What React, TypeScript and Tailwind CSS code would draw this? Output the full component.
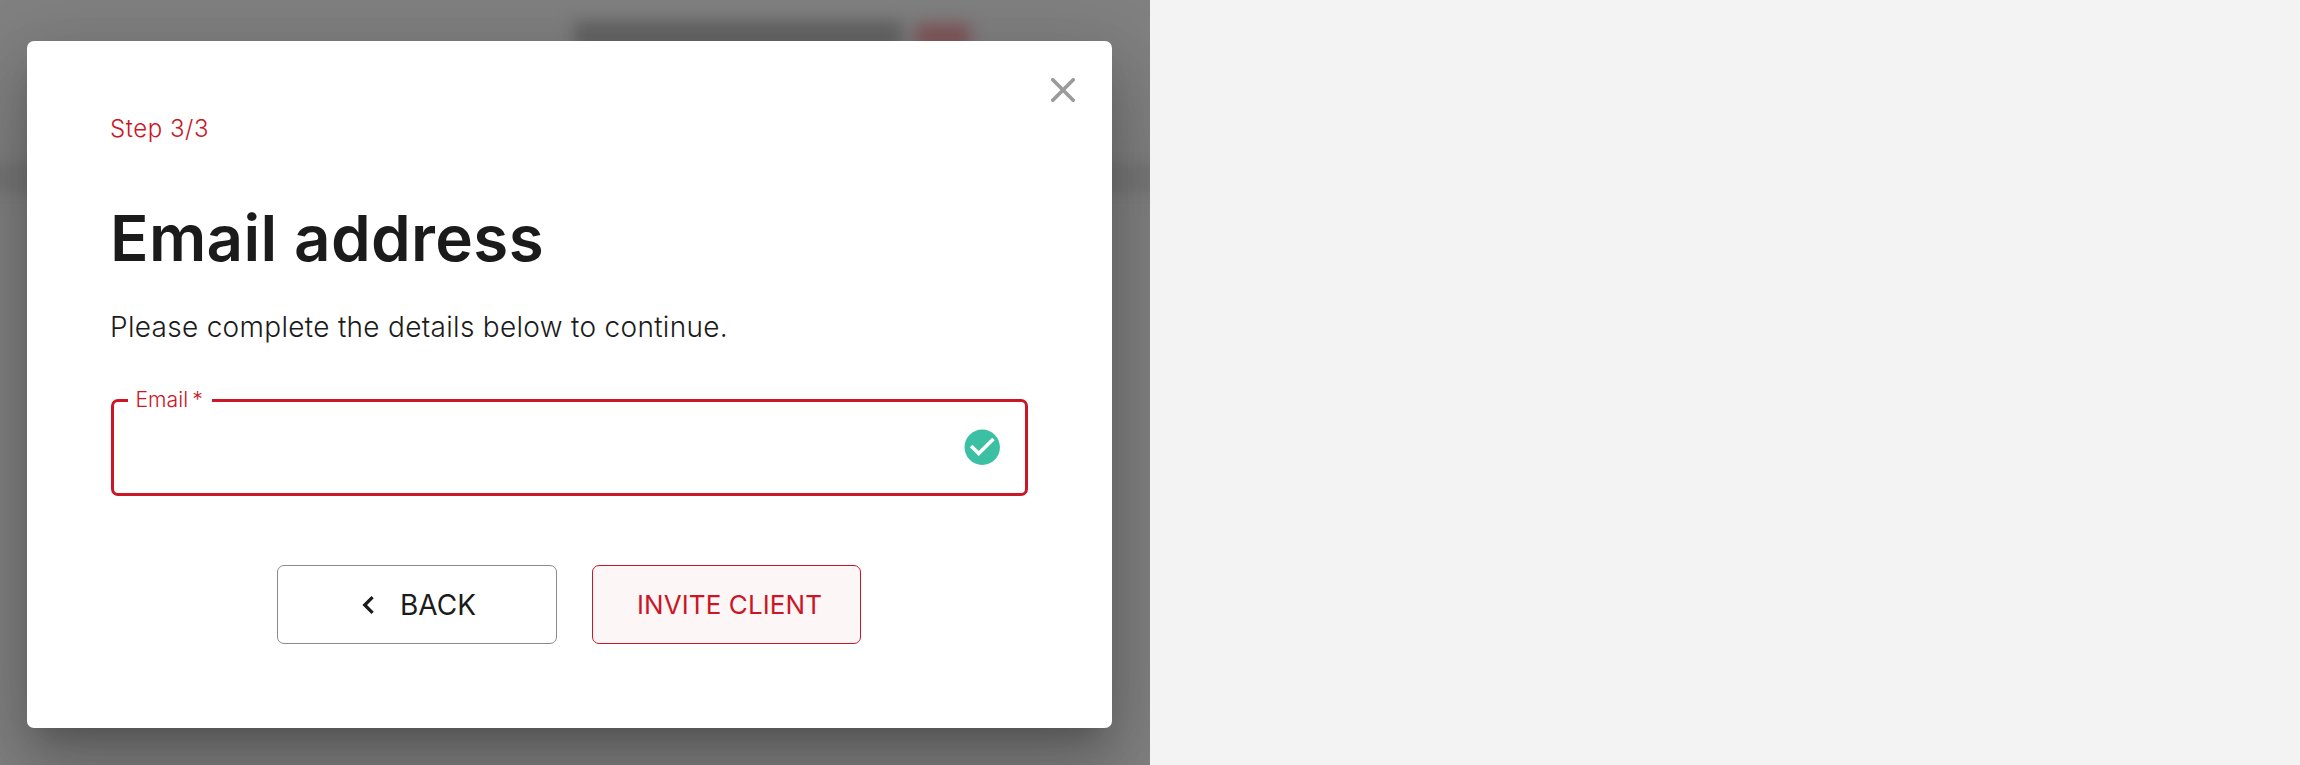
import React from "react";

const fontStack = "font-['Inter',sans-serif]";

function PageBehind() {
  return (
    <div className="absolute inset-0 overflow-hidden bg-[#818181]">
      <div className="absolute -inset-x-10 top-[164px] h-[28px] bg-[#757575] blur-[10px]" />
      <div className="absolute left-[574px] top-[21px] flex gap-[14px] blur-[8px]">
        <div className="h-[28px] w-[328px] bg-[#646464]" />
        <div className="mt-[3px] h-[25px] w-[54px] bg-[#80555a]" />
      </div>
    </div>
  );
}

function EmailField() {
  return (
    <div className="relative mt-[57px] flex h-[97px] w-[917px] items-center justify-end rounded-[7px] border-[3px] border-[#cb1625] pr-[22px]">
      <label className="absolute -top-[17px] left-[14px] h-[30px] w-[84px] bg-white pl-[7.5px] text-[21.2px] font-light leading-[28px] whitespace-nowrap text-[#cb1625]">
        Email<span className="ml-1">*</span>
      </label>
      <svg className="size-[42.5px]" viewBox="0 0 24 24" fill="#3bc0a3">
        <path d="M12 2C6.48 2 2 6.48 2 12s4.48 10 10 10 10-4.48 10-10S17.52 2 12 2zm-2 15l-5-5 1.41-1.41L10 14.17l7.59-7.59L19 8l-9 9z" />
      </svg>
    </div>
  );
}

export default function App() {
  return (
    <div className={`h-[765px] w-[2300px] overflow-hidden bg-[#f3f3f3] ${fontStack}`}>
      <div className="relative h-full w-[1150px] overflow-hidden pl-[27px] pt-[41px]">
        <PageBehind />
        <div className="relative h-[687px] w-[1085px] rounded-[7px] bg-white pl-[84px] pt-[70px] text-[#1b1b1b] shadow-[0_19.5px_26.5px_-12.4px_rgba(0,0,0,0.2),0_42.5px_67px_5.3px_rgba(0,0,0,0.14),0_16px_81px_14px_rgba(0,0,0,0.12)]">
          <button className="absolute right-[37px] top-[37px] size-6" aria-label="Close">
            <svg className="size-6" viewBox="0 0 24 24" fill="none" stroke="#9b9b9b" strokeWidth="3.7" strokeLinecap="round">
              <path d="M1.8 1.8 22.2 22.2M22.2 1.8 1.8 22.2" />
            </svg>
          </button>
          <p className="-ml-px h-9 text-[24px] font-light leading-[36px] tracking-[0.55px] text-[#cb1625]">Step 3/3</p>
          <h1 className="-ml-px mt-[51px] h-20 text-[63.7px] font-semibold leading-[80px] tracking-[0.35px]">Email address</h1>
          <p className="-ml-px mt-[28px] h-[36px] text-[28px] font-light leading-[42px] tracking-[0.3px]">
            Please complete the details below to continue.
          </p>
          <EmailField />
          <div className="mt-[69px] flex gap-[35px] pl-[166px]">
            <button className="flex h-[79px] w-[280px] items-center rounded-[7px] border border-[#8a8a8a] pl-[84px] text-[28px]">
              <svg className="w-[12px]" viewBox="0 0 12 18" fill="none" stroke="currentColor" strokeWidth="3.2">
                <path d="M10.6 1.2 2.7 9 10.6 16.8" />
              </svg>
              <span className="ml-[26px]">BACK</span>
            </button>
            <button className="h-[79px] w-[269px] rounded-[7px] border border-[#cb1625] bg-[#fdf6f6] pl-[6px] text-[26px] tracking-[0.1px] text-[#cb1625]">
              INVITE CLIENT
            </button>
          </div>
        </div>
      </div>
    </div>
  );
}
